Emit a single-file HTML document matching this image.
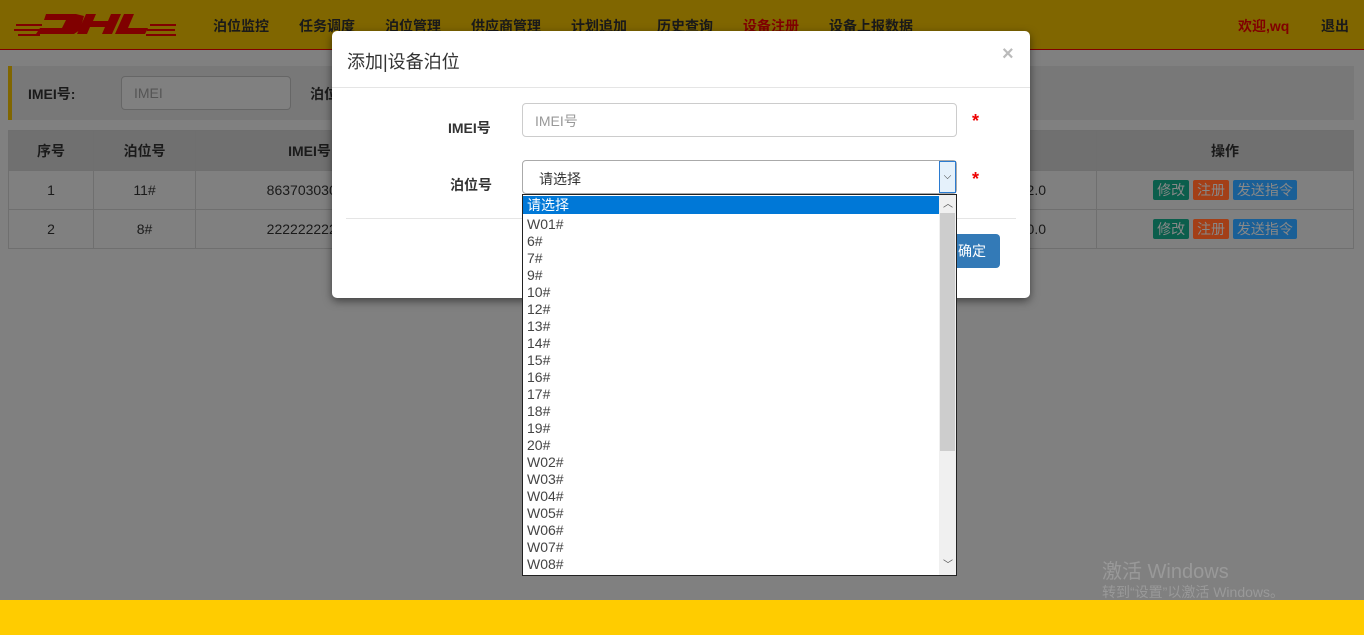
<!DOCTYPE html>
<html><head><meta charset="utf-8"><style>
*{box-sizing:border-box;margin:0;padding:0}
body{width:1364px;height:635px;overflow:hidden;position:relative;background:#808080;font-family:"Liberation Sans","Noto Sans CJK SC",sans-serif;font-size:14px;color:#1a1a1a}
.hdr{position:absolute;left:0;top:0;width:1364px;height:50px;background:#806600;border-bottom:1px solid #800000}
.nav{position:absolute;top:16px;font-size:14px;font-weight:bold;color:#1a1a1a}
.abs{position:absolute}
.filter{position:absolute;left:8px;top:66px;width:1346px;height:54px;background:#787878;border-left:4px solid #806600}
table{position:absolute;left:8px;top:130px;border-collapse:collapse;width:1346px;color:#1a1a1a}
td,th{border:1px solid #6f6f6f;text-align:center;height:39px;font-size:14px}
th{background:#707070;height:40px}
.b{display:inline-block;padding:1px 4px;color:#888;font-size:14px;border-radius:2px;line-height:18px}
.modal{position:absolute;left:332px;top:31px;width:698px;height:267px;background:#fff;border-radius:5px;box-shadow:0 3px 9px rgba(0,0,0,.5)}
.inp{position:absolute;border:1px solid #ccc;border-radius:4px;background:#fff}
.list{position:absolute;left:522px;top:194px;width:435px;height:382px;border:1px solid #222;background:#fff;overflow:hidden}
.list div{height:17px;line-height:17px;padding-left:4px;font-size:14px;color:#444}
.foot{position:absolute;left:0;top:600px;width:1364px;height:35px;background:#ffcc00}
</style></head><body>
<div class="hdr">
<svg class="abs" style="left:14px;top:12px" width="164" height="26" viewBox="0 0 164 26"><g fill="#800000">
<polygon points="32,2 62,2 70,4 66,18 60,22 22,22 26,16 48,16 52,8 30,8"/>
<polygon points="72,2 82,2 79,9 94,9 97,2 107,2 98,22 88,22 91,15 76,15 73,22 63,22"/>
<polygon points="110,2 120,2 114,16 134,16 131,22 101,22"/>
<rect x="2" y="12" width="26" height="2"/><rect x="0" y="17" width="26" height="2"/><rect x="4" y="22" width="22" height="2"/>
<rect x="136" y="12" width="26" height="2"/><rect x="133" y="17" width="28" height="2"/><rect x="132" y="22" width="30" height="2"/></g></svg>
<span class="nav" style="left:213px">泊位监控</span>
<span class="nav" style="left:299px">任务调度</span>
<span class="nav" style="left:385px">泊位管理</span>
<span class="nav" style="left:471px">供应商管理</span>
<span class="nav" style="left:571px">计划追加</span>
<span class="nav" style="left:657px">历史查询</span>
<span class="nav" style="left:743px;color:#800000">设备注册</span>
<span class="nav" style="left:829px">设备上报数据</span>
<span class="nav" style="left:1238px;color:#800000">欢迎,wq</span>
<span class="nav" style="left:1321px">退出</span>
</div>
<div class="filter">
<span class="abs" style="left:16px;top:18px;font-weight:bold;font-size:14px">IMEI号:</span>
<div class="inp" style="left:109px;top:10px;width:170px;height:34px;background:#808080;border-color:#666"><span class="abs" style="left:12px;top:8px;color:#555">IMEI</span></div>
<span class="abs" style="left:298px;top:18px;font-weight:bold">泊位</span>
</div>
<table>
<tr><th style="width:85px">序号</th><th style="width:102px">泊位号</th><th style="width:228px">IMEI号</th><th></th><th style="width:257px">操作</th></tr>
<tr><td>1</td><td>11#</td><td>86370303013</td><td style="text-align:right;padding-right:50px">2.0</td><td><span class="b" style="background:#0b5e4c">修改</span> <span class="b" style="background:#a33f17">注册</span> <span class="b" style="background:#1a5f96">发送指令</span></td></tr>
<tr><td>2</td><td>8#</td><td>22222222222</td><td style="text-align:right;padding-right:50px">0.0</td><td><span class="b" style="background:#0b5e4c">修改</span> <span class="b" style="background:#a33f17">注册</span> <span class="b" style="background:#1a5f96">发送指令</span></td></tr>
</table>
<div class="abs" style="left:1102px;top:555px;color:#999;font-size:20px">激活 Windows</div>
<div class="abs" style="left:1102px;top:582px;color:#999;font-size:14px">转到“设置”以激活 Windows。</div>
<div class="modal">
<div class="abs" style="left:15px;top:17px;font-size:18px;color:#333">添加|设备泊位</div>
<div class="abs" style="left:670px;top:12px;font-size:20px;font-weight:bold;color:#bbb">×</div>
<div class="abs" style="left:0;top:56px;width:698px;height:1px;background:#e5e5e5"></div>
<div class="abs" style="left:116px;top:87px;font-weight:bold;color:#333">IMEI号</div>
<div class="inp" style="left:190px;top:72px;width:435px;height:34px"><span class="abs" style="left:12px;top:7px;color:#999">IMEI号</span></div>
<div class="abs" style="left:640px;top:80px;color:#e00;font-size:18px;font-weight:bold">*</div>
<div class="abs" style="left:118px;top:144px;font-weight:bold;color:#333">泊位号</div>
<div class="inp" style="left:190px;top:129px;width:435px;height:34px;border-color:#aaa"><span class="abs" style="left:16px;top:8px;color:#333">请选择</span>
<div class="abs" style="right:0;top:0;width:17px;height:32px;border:1px solid #2b7bd0;background:#e5f1fb;text-align:center;font-size:10px;line-height:30px;color:#333">⌵</div></div>
<div class="abs" style="left:640px;top:138px;color:#e00;font-size:18px;font-weight:bold">*</div>
<div class="abs" style="left:14px;top:187px;width:670px;height:1px;background:#e5e5e5"></div>
<div class="abs" style="left:618px;top:203px;width:50px;height:34px;background:#337ab7;border-radius:4px;color:#fff;line-height:34px;padding-left:8px">确定</div>
</div>
<div class="list">
<div style="background:#0078d7;color:#fff;margin-right:17px;margin-top:1px;height:18px;line-height:19px">请选择</div>
<div style="margin-top:2px">W01#</div><div>6#</div><div>7#</div><div>9#</div><div>10#</div><div>12#</div><div>13#</div><div>14#</div><div>15#</div><div>16#</div><div>17#</div><div>18#</div><div>19#</div><div>20#</div><div>W02#</div><div>W03#</div><div>W04#</div><div>W05#</div><div>W06#</div><div>W07#</div><div>W08#</div>
<div class="abs" style="right:0;top:0;width:17px;height:380px;background:#f0f0f0;padding:0"></div>
<div class="abs" style="right:1px;top:18px;width:15px;height:238px;background:#cdcdcd;padding:0"></div>
<div class="abs" style="right:3px;top:1px;font-size:10px;color:#555;padding:0">︿</div>
<div class="abs" style="right:3px;top:362px;font-size:10px;color:#555;padding:0">﹀</div>
</div>
<div class="foot"></div>
</body></html>
